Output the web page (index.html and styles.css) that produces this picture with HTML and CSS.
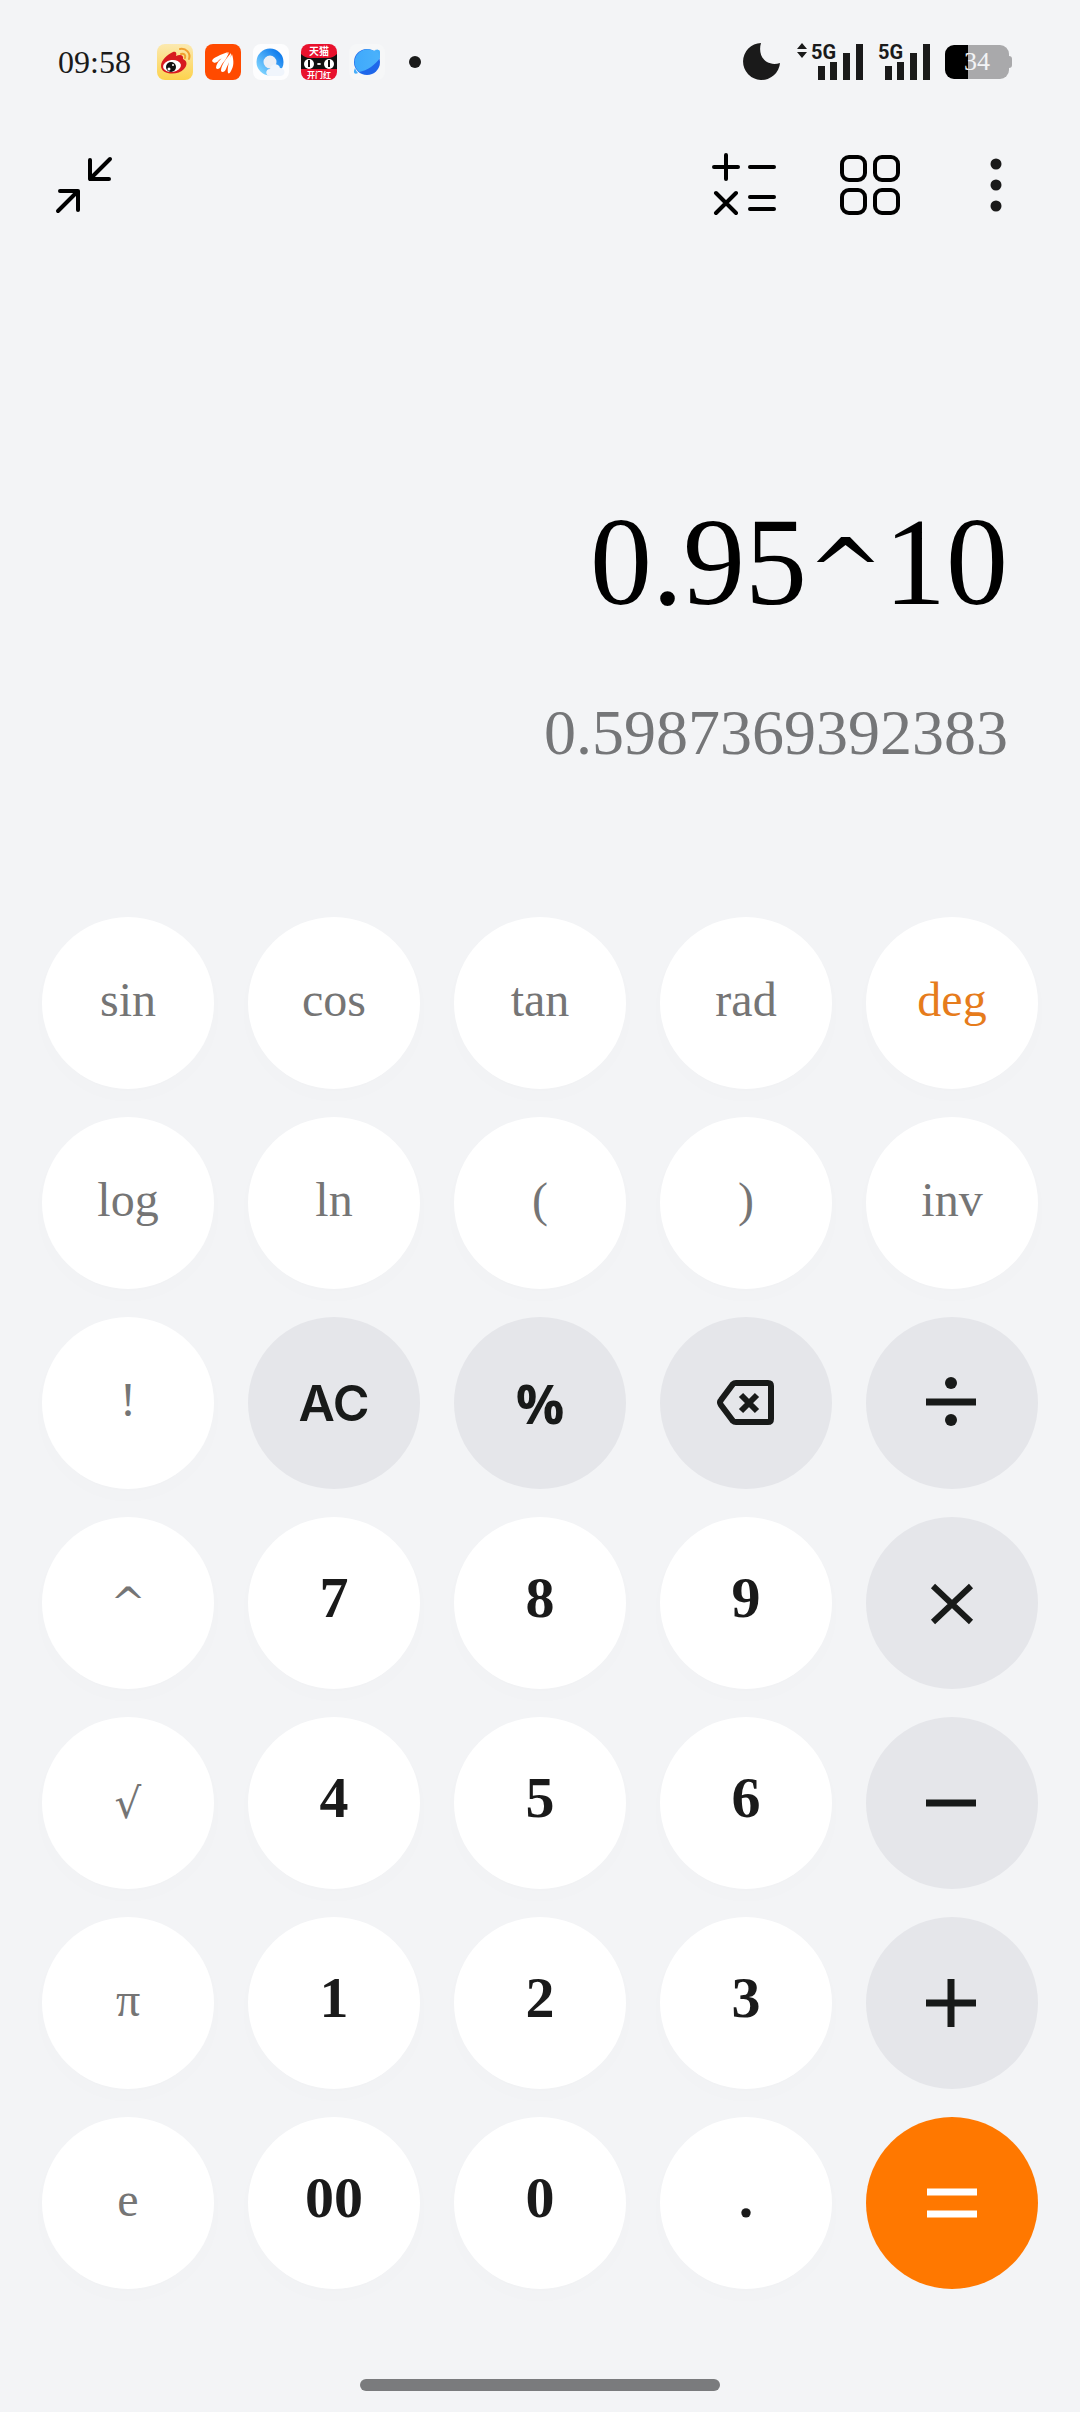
FILE: index.html
```html
<!DOCTYPE html>
<html lang="en">
<head>
    <meta charset="UTF-8">
    <meta name="viewport" content="width=device-width, initial-scale=1.0">
    <title>Calculator</title>
    <link rel="stylesheet" href="styles.css">
</head>
<body>

    <!-- Status Bar -->
    <div class="status-bar">
        <span class="clock">09:58</span>
        <div class="notifications">
            <svg width="36" height="36" viewBox="0 0 36 36">
                <defs>
                    <linearGradient id="weibo-bg" x1="0" y1="0" x2="0" y2="1">
                        <stop offset="0" stop-color="#fbe9b0"/>
                        <stop offset="1" stop-color="#fdd24c"/>
                    </linearGradient>
                </defs>
                <rect width="36" height="36" rx="8" fill="url(#weibo-bg)"/>
                <path d="M4 22c0-6 7-12 12-14 3-1 4 1 3 4 4-2 8-1 7 3 5 2 4 7 1 10-6 7-23 6-23-3z" fill="#d7191f"/>
                <ellipse cx="15" cy="22" rx="9" ry="6" fill="#fff" transform="rotate(-8 15 22)"/>
                <circle cx="14" cy="23" r="5" fill="#111"/>
                <circle cx="12" cy="25" r="1.5" fill="#fff"/>
                <circle cx="16" cy="21" r="1" fill="#fff"/>
                <path d="M23 5c6-1 11 4 9 10M24 10c3-1 5 1 4 4" fill="none" stroke="#f0a030" stroke-width="2" stroke-linecap="round"/>
            </svg>
            <svg width="36" height="36" viewBox="0 0 36 36">
                <rect width="36" height="36" rx="8" fill="#ff4a00"/>
                <path d="M7 17c1-4 9-6 16-9-2 4-6 6-9 8-2 3-5 4-7 1zM11 24c0-6 7-11 13-16-2 7-6 10-8 14-1 3-4 4-5 2zM16 27c0-6 5-12 10-18 0 7-3 11-5 16-1 3-4 4-5 2zM23 29c-1-5 1-12 4-19 2 7 2 12-1 17-1 2-2 3-3 2z" fill="#fff"/>
            </svg>
            <svg width="36" height="36" viewBox="0 0 36 36">
                <defs>
                    <linearGradient id="browser-ring" x1="0" y1="1" x2="1" y2="0">
                        <stop offset="0" stop-color="#7fd4ff"/>
                        <stop offset="1" stop-color="#0b78ec"/>
                    </linearGradient>
                </defs>
                <rect width="36" height="36" rx="8" fill="#fdfdfe"/>
                <circle cx="17" cy="18" r="10" fill="#eceff5" stroke="url(#browser-ring)" stroke-width="7"/>
                <path d="M17 32c-5 0-5-7 0-7 1-6 9-6 10-1 6 0 6 8 0 8z" fill="#f0f5fc"/>
            </svg>
            <svg width="36" height="36" viewBox="0 0 36 36">
                <rect width="36" height="36" rx="8" fill="#e8112d"/>
                <text class="app-text" x="18" y="11" text-anchor="middle">天猫</text>
                <path d="M0 10q4 4 9 4h18q5 0 9-4v15H0z" fill="#111"/>
                <ellipse cx="8" cy="20" rx="5" ry="5" fill="#fff"/>
                <ellipse cx="28" cy="20" rx="5" ry="5" fill="#fff"/>
                <path d="M8 16v7M28 16v7" stroke="#111" stroke-width="2"/>
                <ellipse cx="18" cy="20" rx="2" ry="1" fill="#fff"/>
                <text class="app-text app-text-small" x="18" y="34" text-anchor="middle">开门红</text>
            </svg>
            <svg width="36" height="36" viewBox="0 0 36 36">
                <defs>
                    <linearGradient id="planet" x1="0" y1="0" x2="1" y2="0">
                        <stop offset="0" stop-color="#3fa9fb"/>
                        <stop offset="1" stop-color="#4bb2fb"/>
                    </linearGradient>
                </defs>
                <rect width="36" height="36" rx="8" fill="#f6f7f8"/>
                <circle cx="18" cy="18" r="13" fill="#1f67ea"/>
                <path d="M31 14C27 20 18 27 10 28A13 13 0 0 1 23 6q2 1 4 0 4-1 4 2z" fill="url(#planet)"/>
                <path d="M6 24c-2 4-1 7 3 5q-2-2-3-5zM26 6c4-1 6 1 4 6q-1-4-4-6z" fill="#45adfa"/>
            </svg>
        </div>
        <span class="more-dot"></span>

        <div class="indicators">
            <svg class="moon" width="38" height="38" viewBox="0 0 38 38">
                <path d="M18 0A18.500 18.500 0 1 0 37 20C24 24 14 14 18 0z" fill="#1a1a1a"/>
            </svg>
            <svg width="67" height="38" viewBox="0 0 67 38">
                <path d="M6 0l5 6H1zM1 9h10l-5 6z" fill="#1a1a1a"/>
                <text class="network" x="15" y="16">5G</text>
                <path d="M22 23h7v14h-7zM34 19h7v18h-7zM47 10h7v27h-7zM60 1h7v36h-7z" fill="#1a1a1a"/>
            </svg>
            <svg width="52" height="38" viewBox="0 0 52 38">
                <text class="network" x="0" y="16">5G</text>
                <path d="M7 23h7v14H7zM19 19h7v18h-7zM32 10h7v27h-7zM45 1h7v36h-7z" fill="#1a1a1a"/>
            </svg>
            <div class="battery"><span>34</span></div>
        </div>
    </div>

    <!-- Toolbar -->
    <div class="toolbar">
        <button class="icon-button collapse" aria-label="Collapse">
            <svg width="64" height="64" viewBox="0 0 64 64">
                <path d="M8 38h18v19M26 38L6 58M38 7v19h19M38 26L58 6"/>
            </svg>
        </button>
        <button class="icon-button" aria-label="Calculator">
            <svg width="64" height="64" viewBox="0 0 64 64">
                <path d="M2 14h24M14 2v24M38 14h24M4 40l20 20M24 40L4 60M38 44h24M38 56h24"/>
            </svg>
        </button>
        <button class="icon-button" aria-label="Converters">
            <svg width="64" height="64" viewBox="0 0 64 64">
                <rect x="4" y="4" width="23" height="23" rx="7"/>
                <rect x="37" y="4" width="23" height="23" rx="7"/>
                <rect x="4" y="37" width="23" height="23" rx="7"/>
                <rect x="37" y="37" width="23" height="23" rx="7"/>
            </svg>
        </button>
        <button class="icon-button" aria-label="More">
            <svg class="dots" width="64" height="64" viewBox="0 0 64 64">
                <circle cx="32" cy="11" r="5.5"/>
                <circle cx="32" cy="32" r="5.5"/>
                <circle cx="32" cy="53" r="5.5"/>
            </svg>
        </button>
    </div>

    <!-- Display -->
    <div class="display">
        <div class="expression">0.95<span class="power">^</span>10</div>
        <div class="result">0.5987369392383</div>
    </div>

    <!-- Keypad -->
    <div class="keypad">
        <button class="key">sin</button>
        <button class="key">cos</button>
        <button class="key">tan</button>
        <button class="key">rad</button>
        <button class="key active">deg</button>

        <button class="key">log</button>
        <button class="key">ln</button>
        <button class="key">(</button>
        <button class="key">)</button>
        <button class="key">inv</button>

        <button class="key">!</button>
        <button class="key operator clear">AC</button>
        <button class="key operator percent">%</button>
        <button class="key operator" aria-label="Delete">
            <svg width="64" height="64" viewBox="0 0 64 64">
                <path d="M22 12h32q3 0 3 3v33q0 3-3 3H22q-2 0-3-1L7 34q-2-3 0-5l12-16q1-1 3-1z" stroke-width="6"/>
                <path d="M27 24l16 16M43 24L27 40" stroke-width="6"/>
            </svg>
        </button>
        <button class="key operator" aria-label="Divide">
            <svg width="64" height="64" viewBox="0 0 64 64">
                <path d="M6 31h50"/>
                <circle class="dot" cx="31" cy="12" r="6"/>
                <circle class="dot" cx="31" cy="49" r="6"/>
            </svg>
        </button>

        <button class="key symbol">^</button>
        <button class="key digit">7</button>
        <button class="key digit">8</button>
        <button class="key digit">9</button>
        <button class="key operator" aria-label="Multiply">
            <svg width="64" height="64" viewBox="0 0 64 64">
                <path d="M13 15l38 36M51 15L13 51" stroke-width="6"/>
            </svg>
        </button>

        <button class="key symbol">√</button>
        <button class="key digit">4</button>
        <button class="key digit">5</button>
        <button class="key digit">6</button>
        <button class="key operator" aria-label="Subtract">
            <svg width="64" height="64" viewBox="0 0 64 64">
                <path d="M6 32h50"/>
            </svg>
        </button>

        <button class="key">π</button>
        <button class="key digit">1</button>
        <button class="key digit">2</button>
        <button class="key digit">3</button>
        <button class="key operator" aria-label="Add">
            <svg width="64" height="64" viewBox="0 0 64 64">
                <path d="M6 32h50M31 8v48"/>
            </svg>
        </button>

        <button class="key">e</button>
        <button class="key digit">00</button>
        <button class="key digit">0</button>
        <button class="key digit">.</button>
        <button class="key operator equals" aria-label="Equals">
            <svg width="64" height="64" viewBox="0 0 64 64">
                <path d="M7 21h50M7 43h50"/>
            </svg>
        </button>
    </div>

    <div class="home-bar"></div>

</body>
</html>
```

FILE: styles.css
```css
* {
    box-sizing: border-box;
}

body {
    background-color: #f3f4f6;
    font-family: "Liberation Serif", "Noto Sans CJK SC", serif;
    margin: 0;
    min-height: 100vh;
    display: flex;
    flex-direction: column;
}

button {
    border: none;
    padding: 0;
    font-family: inherit;
    cursor: pointer;
}

svg {
    display: block;
    overflow: visible;
}

/* Status bar */
.status-bar {
    display: flex;
    align-items: center;
    height: 124px;
    padding: 0 71px 0 58px;
}

.clock {
    font-size: 32px;
    color: #1a1a1a;
    width: 99px;
}

.notifications {
    display: flex;
    gap: 12px;
}

.app-text {
    font-family: "Noto Sans CJK SC", sans-serif;
    font-size: 10px;
    font-weight: bold;
    fill: #ffffff;
}

.app-text-small {
    font-size: 8px;
}

.more-dot {
    width: 12px;
    height: 12px;
    margin-left: 24px;
    border-radius: 50%;
    background-color: #1a1a1a;
}

.indicators {
    display: flex;
    align-items: center;
    gap: 15px;
    margin-left: auto;
}

.network {
    font-family: Roboto, sans-serif;
    font-size: 20px;
    font-weight: 700;
    fill: #1a1a1a;
}

.battery {
    position: relative;
    width: 64px;
    height: 34px;
    border-radius: 9px;
    background: linear-gradient(to right, #000000 36%, #a9a9ab 36%);
    color: #f3f4f6;
    font-size: 26px;
    line-height: 34px;
    text-align: center;
}

.battery::after {
    content: "";
    position: absolute;
    right: -3px;
    top: 11px;
    width: 3px;
    height: 12px;
    border-radius: 0 3px 3px 0;
    background-color: #a9a9ab;
}

/* Toolbar */
.toolbar {
    display: flex;
    align-items: center;
    gap: 62px;
    height: 122px;
    padding: 0 52px;
}

.icon-button {
    background: none;
}

.icon-button svg {
    fill: none;
    stroke: #000000;
    stroke-width: 4;
    stroke-linecap: round;
    stroke-linejoin: round;
}

.icon-button .dots {
    fill: #1a1a1a;
    stroke: none;
}

.collapse {
    margin-right: auto;
}

/* Display */
.display {
    flex: 1;
    display: flex;
    flex-direction: column;
    justify-content: flex-end;
    gap: 64px;
    padding: 0 72px 148px;
    text-align: right;
}

.expression {
    font-size: 124px;
    line-height: 140px;
    color: #000000;
}

.power {
    font-family: "DejaVu Serif", serif;
    font-size: 92px;
    line-height: 1;
}

.result {
    font-size: 64px;
    line-height: 72px;
    color: #757678;
}

/* Keypad */
.keypad {
    display: grid;
    grid-template-columns: repeat(5, 1fr);
    gap: 28px 34px;
    padding: 0 42px;
}

.key {
    display: flex;
    align-items: center;
    justify-content: center;
    aspect-ratio: 1;
    padding-bottom: 8px;
    border-radius: 50%;
    background-color: #ffffff;
    box-shadow: 0 8px 24px rgba(0, 0, 0, 0.01);
    color: #757575;
    font-size: 48px;
}

.active {
    color: #e67c1c;
}

.symbol {
    padding-bottom: 0;
    font-family: "DejaVu Serif", serif;
    font-size: 42px;
}

.digit {
    padding-bottom: 12px;
    color: #1a1a1a;
    font-size: 58px;
    font-weight: bold;
}

.operator {
    padding-bottom: 0;
    background-color: #e5e6ea;
    box-shadow: none;
    color: #181a19;
}

.operator svg {
    fill: none;
    stroke: #181a19;
    stroke-width: 7;
}

.operator .dot {
    fill: #181a19;
    stroke: none;
}

.clear {
    font-family: Inter, sans-serif;
    font-size: 50px;
    font-weight: 600;
}

.percent {
    font-family: "Open Sans", sans-serif;
    font-size: 54px;
    font-weight: 700;
}

.equals {
    background-color: #ff7800;
}

.equals svg {
    stroke: #ffffff;
}

/* Home indicator */
.home-bar {
    width: 33.333%;
    height: 12px;
    margin: 90px auto 21px;
    border-radius: 6px;
    background-color: #7a7b7d;
}
```
